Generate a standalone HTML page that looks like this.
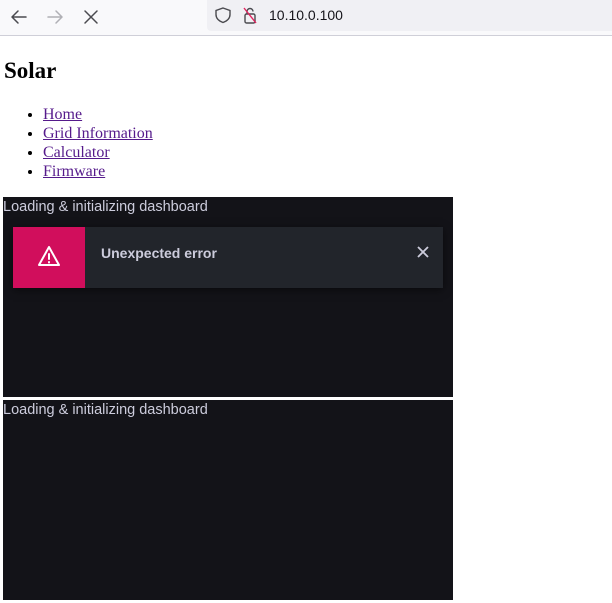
<!DOCTYPE html>
<html><head><style>
body{margin:0;width:612px;height:603px;overflow:hidden;background:#fff;font-family:"Liberation Serif",serif;position:relative}
.bar{position:absolute;left:0;top:0;width:612px;height:35px;background:#f9f9fb;border-bottom:1px solid #cfcfd8}
.url{position:absolute;left:207px;top:0;width:405px;height:31px;background:#f0f0f4;border-radius:0 0 0 4px}
.url span{position:absolute;left:62px;top:7px;font:14px "Liberation Sans",sans-serif;color:#15141a}
h1{position:absolute;left:4px;top:58px;margin:0;font-size:23px;font-weight:bold}
ul{position:absolute;left:0;top:105px;margin:0;padding-left:43px;font-size:16px;line-height:19px}
a{color:#551a8b}
.dash{position:absolute;left:3px;width:450px;height:200px;background:#131318;color:#ccccdc;font:14.5px "Liberation Sans",sans-serif;overflow:hidden}
.dash .t{position:absolute;left:0;top:2px}
.toast{position:absolute;left:10px;top:30px;width:430px;height:61px;background:#22252b;box-shadow:0 2px 8px rgba(0,0,0,.5)}
.toast .ic{position:absolute;left:0;top:0;width:72px;height:61px;background:#d10e5c}
.toast .m{position:absolute;left:88px;top:18px;font:bold 14px "Liberation Sans",sans-serif;color:#ccccdc}
</style></head><body>
<div class="bar">
<svg width="200" height="35" style="position:absolute;left:0;top:0" fill="none" stroke-width="1.5" stroke-linecap="round" stroke-linejoin="round">
<path d="M26 17H12M18 11l-6 6 6 6" stroke="#4a4a4f"/>
<path d="M48 17h14M56 11l6 6-6 6" stroke="#b0b0b5"/>
<path d="M85 11l12 12M97 11L85 23" stroke="#4a4a4f"/>
</svg>
<div class="url">
<svg width="60" height="31" style="position:absolute;left:0;top:0" fill="none" stroke-width="1.4">
<path d="M16 8l7 2.5v4c0 4-3 6.5-7 8-4-1.5-7-4-7-8v-4z" stroke="#4a4a4f"/>
<rect x="38" y="14" width="10" height="9" rx="1.5" stroke="#4a4a4f"/><path d="M40 14v-2.5a3 3 0 0 1 6 0" stroke="#4a4a4f"/>
<path d="M37 8l12 15" stroke="#e0245e"/>
</svg>
<span>10.10.0.100</span></div>
</div>
<h1>Solar</h1>
<ul><li><a href="#">Home</a></li><li><a href="#">Grid Information</a></li><li><a href="#">Calculator</a></li><li><a href="#">Firmware</a></li></ul>
<div class="dash" style="top:197px"><div class="t">Loading &amp; initializing dashboard</div>
<div class="toast"><div class="ic"><svg width="72" height="61" fill="none" stroke="#fff" stroke-width="2" stroke-linejoin="round"><path d="M36 20l10 18H26z"/><path d="M36 27v5M36 35v.5" stroke-linecap="round"/></svg></div>
<div class="m">Unexpected error</div>
<svg width="12" height="12" style="position:absolute;left:404px;top:19px" stroke="#ccccdc" stroke-width="1.8"><path d="M1 1l10 10M11 1L1 11"/></svg></div></div>
<div class="dash" style="top:400px"><div class="t">Loading &amp; initializing dashboard</div></div>
</body></html>
